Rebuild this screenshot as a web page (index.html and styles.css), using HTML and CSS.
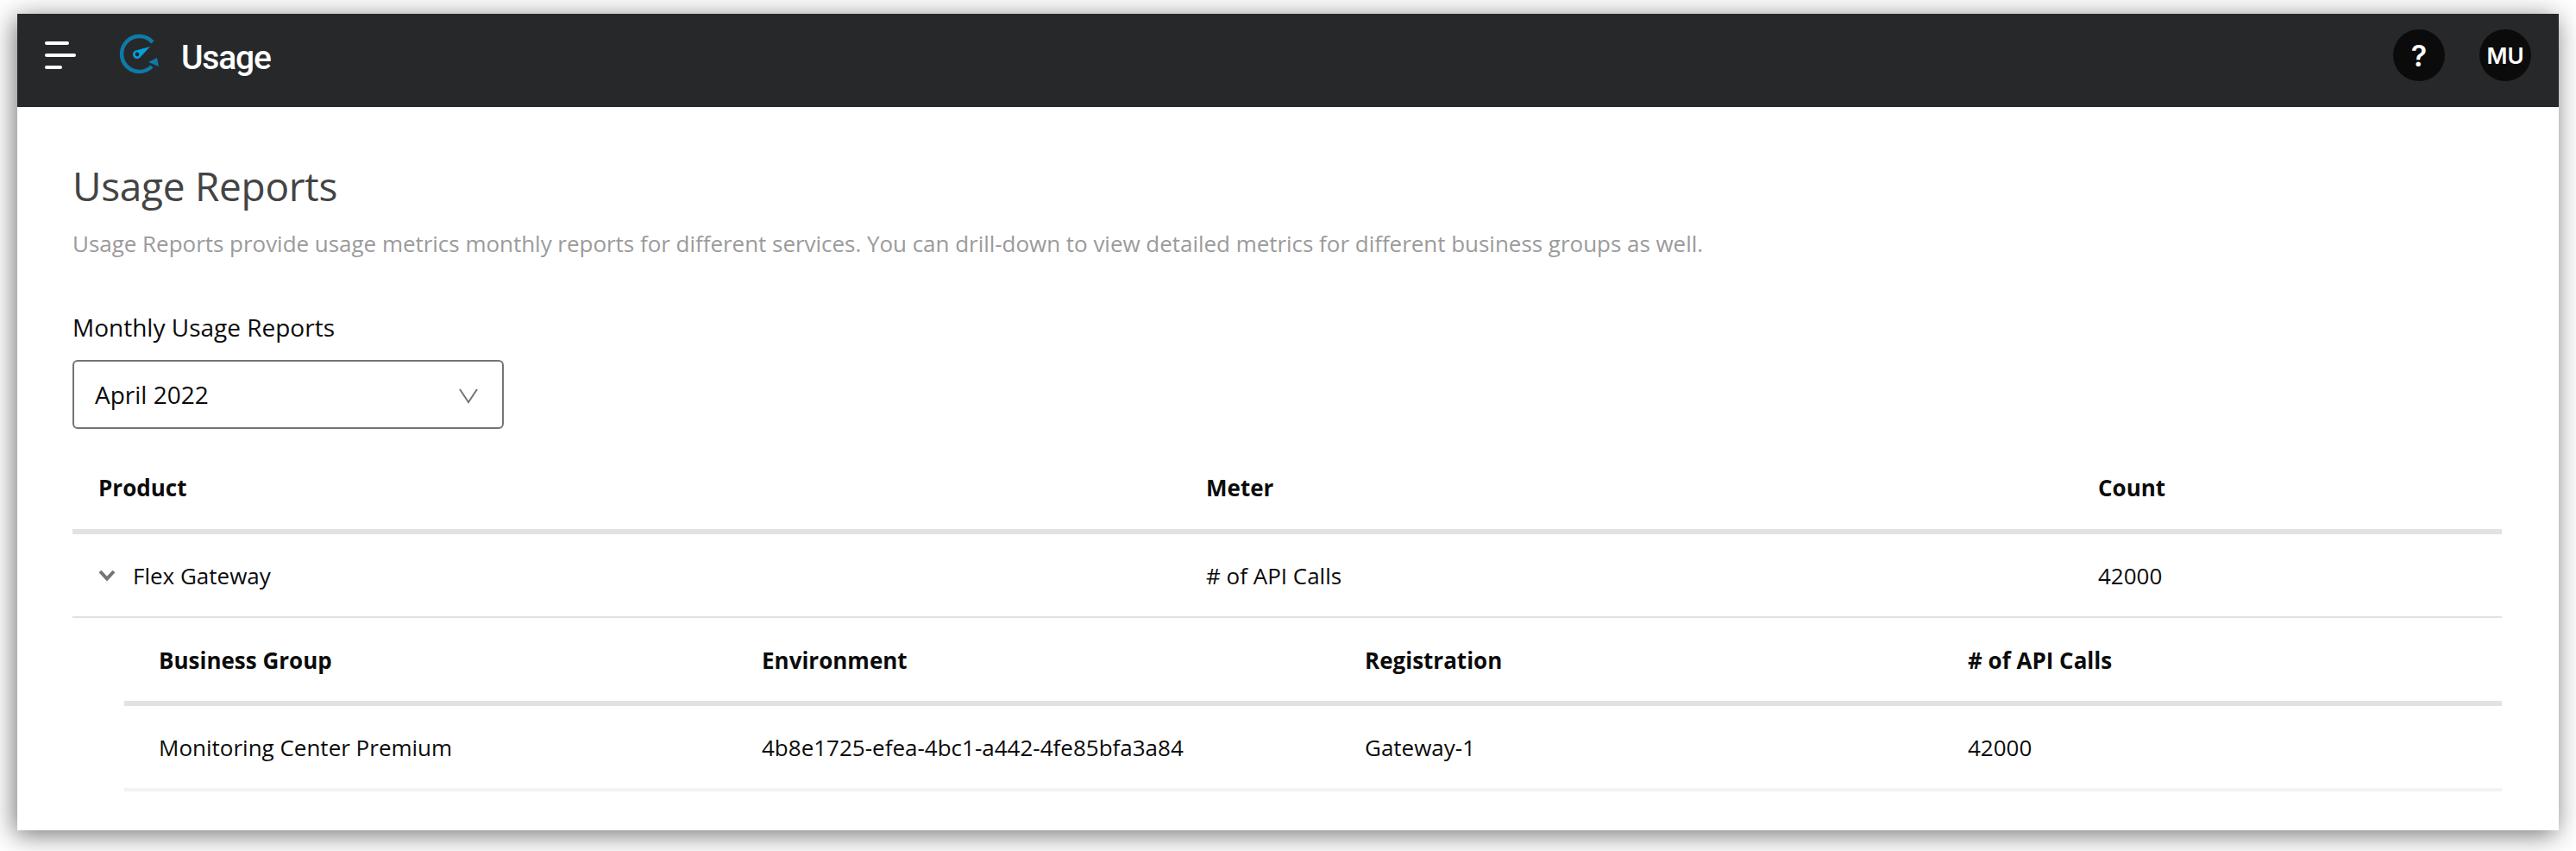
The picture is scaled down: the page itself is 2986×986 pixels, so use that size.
FILE: index.html
```html
<!DOCTYPE html>
<html lang="en">
<head>
    <meta charset="UTF-8">
    <meta name="viewport" content="width=device-width, initial-scale=1.0">
    <title>Usage Reports</title>
    <link rel="stylesheet" href="styles.css">
</head>
<body>
    <div class="window">
        <header class="topbar">
            <svg class="menu-icon" width="36" height="32" viewBox="0 0 36 32" fill="none" stroke="#fff" stroke-width="4" stroke-linecap="round">
                <path d="M2 2H26"/>
                <path d="M2 16H34"/>
                <path d="M2 30H18"/>
            </svg>
            <svg class="app-icon" width="50" height="50" viewBox="0 0 50 50" fill="none">
                <path d="M41 10A20.500 20.500 0 1 0 40 38" stroke="#0f7aa8" stroke-width="4.500"/>
                <path d="M46 28L48 38L36 33Z" fill="#0f7aa8"/>
                <path d="M38 15L25.600 28.300A5 5 0 1 1 20.400 19.700Z" fill="#00a2df"/>
                <circle cx="23" cy="24" r="2.400" fill="#27282a"/>
            </svg>
            <span class="app-name">Usage</span>
            <div class="topbar-right">
                <div class="circle-btn help">?</div>
                <div class="circle-btn">MU</div>
            </div>
        </header>
        <main class="content">
            <h1>Usage Reports</h1>
            <p class="intro">Usage Reports provide usage metrics monthly reports for different services. You can drill-down to view detailed metrics for different business groups as well.</p>
            <div class="field-label">Monthly Usage Reports</div>
            <div class="select-box">
                <span>April 2022</span>
                <svg class="select-arrow" width="22" height="18" viewBox="0 0 22 18" fill="none" stroke="#747474" stroke-width="2">
                    <path d="M1 1L11 16L21 1"/>
                </svg>
            </div>

            <div class="usage-table">
                <div class="row head-row">
                    <div>Product</div>
                    <div>Meter</div>
                    <div>Count</div>
                </div>
                <div class="row body-row">
                    <div class="product-cell">
                        <svg width="20" height="14" viewBox="0 0 20 14" fill="none" stroke="#747474" stroke-width="4">
                            <path d="M2 2L10 10.500L18 2"/>
                        </svg>
                        <span>Flex Gateway</span>
                    </div>
                    <div># of API Calls</div>
                    <div>42000</div>
                </div>
                <div class="detail-table">
                    <div class="detail-row detail-head">
                        <div>Business Group</div>
                        <div>Environment</div>
                        <div>Registration</div>
                        <div># of API Calls</div>
                    </div>
                    <div class="detail-row detail-body">
                        <div>Monitoring Center Premium</div>
                        <div>4b8e1725-efea-4bc1-a442-4fe85bfa3a84</div>
                        <div>Gateway-1</div>
                        <div>42000</div>
                    </div>
                </div>
            </div>
        </main>
    </div>
</body>
</html>
```
FILE: styles.css
```css
html, body {
    height: 100%;
}
body {
    margin: 0;
    padding: 16px 20px 24px;
    box-sizing: border-box;
    background-color: #fff;
    font-family: "Open Sans", sans-serif;
    font-size: 26px;
    color: #0b0b0b;
    overflow: hidden;
}
.window {
    height: 946px;
    background: #fff;
    box-shadow: -3px 5px 28px rgba(0, 0, 0, 0.55);
}
.topbar {
    height: 108px;
    box-sizing: border-box;
    background-color: #27282a;
    display: flex;
    align-items: center;
    padding: 0 32px 12px;
    color: #fff;
}
.menu-icon {
    flex: none;
}
.app-icon {
    flex: none;
    margin-left: 48px;
}
.app-name {
    margin: 6px 0 0 24px;
    font-family: Roboto, sans-serif;
    font-size: 39px;
    font-weight: 500;
    letter-spacing: -1.200px;
}
.topbar-right {
    margin-left: auto;
    display: flex;
    gap: 40px;
}
.circle-btn {
    width: 60px;
    height: 60px;
    border-radius: 50%;
    background-color: #0b0b0b;
    display: flex;
    align-items: center;
    justify-content: center;
    font-family: Inter, sans-serif;
    font-size: 26px;
    font-weight: 600;
}
.help {
    font-size: 34px;
}
.content {
    padding: 56px 66px 0 64px;
}
h1 {
    margin: 0;
    font-size: 46px;
    font-weight: 400;
    line-height: 70px;
    letter-spacing: -0.300px;
    color: #444;
}
.intro {
    margin: 13px 0 0;
    line-height: 38px;
    letter-spacing: -0.030px;
    color: #9b9b9b;
}
.field-label {
    margin-top: 58px;
    font-size: 28px;
    line-height: 40px;
}
.select-box {
    margin-top: 18px;
    box-sizing: border-box;
    width: 500px;
    height: 80px;
    border: 2px solid #747474;
    border-radius: 6px;
    padding: 0 28px 0 24px;
    font-size: 28px;
    display: flex;
    align-items: center;
    justify-content: space-between;
}
.select-arrow {
    margin-top: 4px;
}
.row {
    display: grid;
    grid-template-columns: 1284px 1034px 1fr;
    padding-left: 30px;
    align-items: center;
    box-sizing: border-box;
}
.head-row {
    height: 122px;
    padding-top: 20px;
    border-bottom: 6px solid #e2e2e2;
    font-weight: 700;
}
.body-row {
    height: 97px;
    border-bottom: 2px solid #e2e2e2;
}
.product-cell {
    display: flex;
    align-items: center;
    gap: 20px;
}
.detail-table {
    margin-left: 60px;
}
.detail-row {
    display: grid;
    grid-template-columns: 699px 699px 699px 1fr;
    padding-left: 40px;
    align-items: center;
    box-sizing: border-box;
}
.detail-head {
    height: 102px;
    padding-top: 2px;
    border-bottom: 6px solid #e2e2e2;
    font-weight: 700;
}
.detail-body {
    height: 99px;
    border-bottom: 4px solid #f3f3f3;
}
```
